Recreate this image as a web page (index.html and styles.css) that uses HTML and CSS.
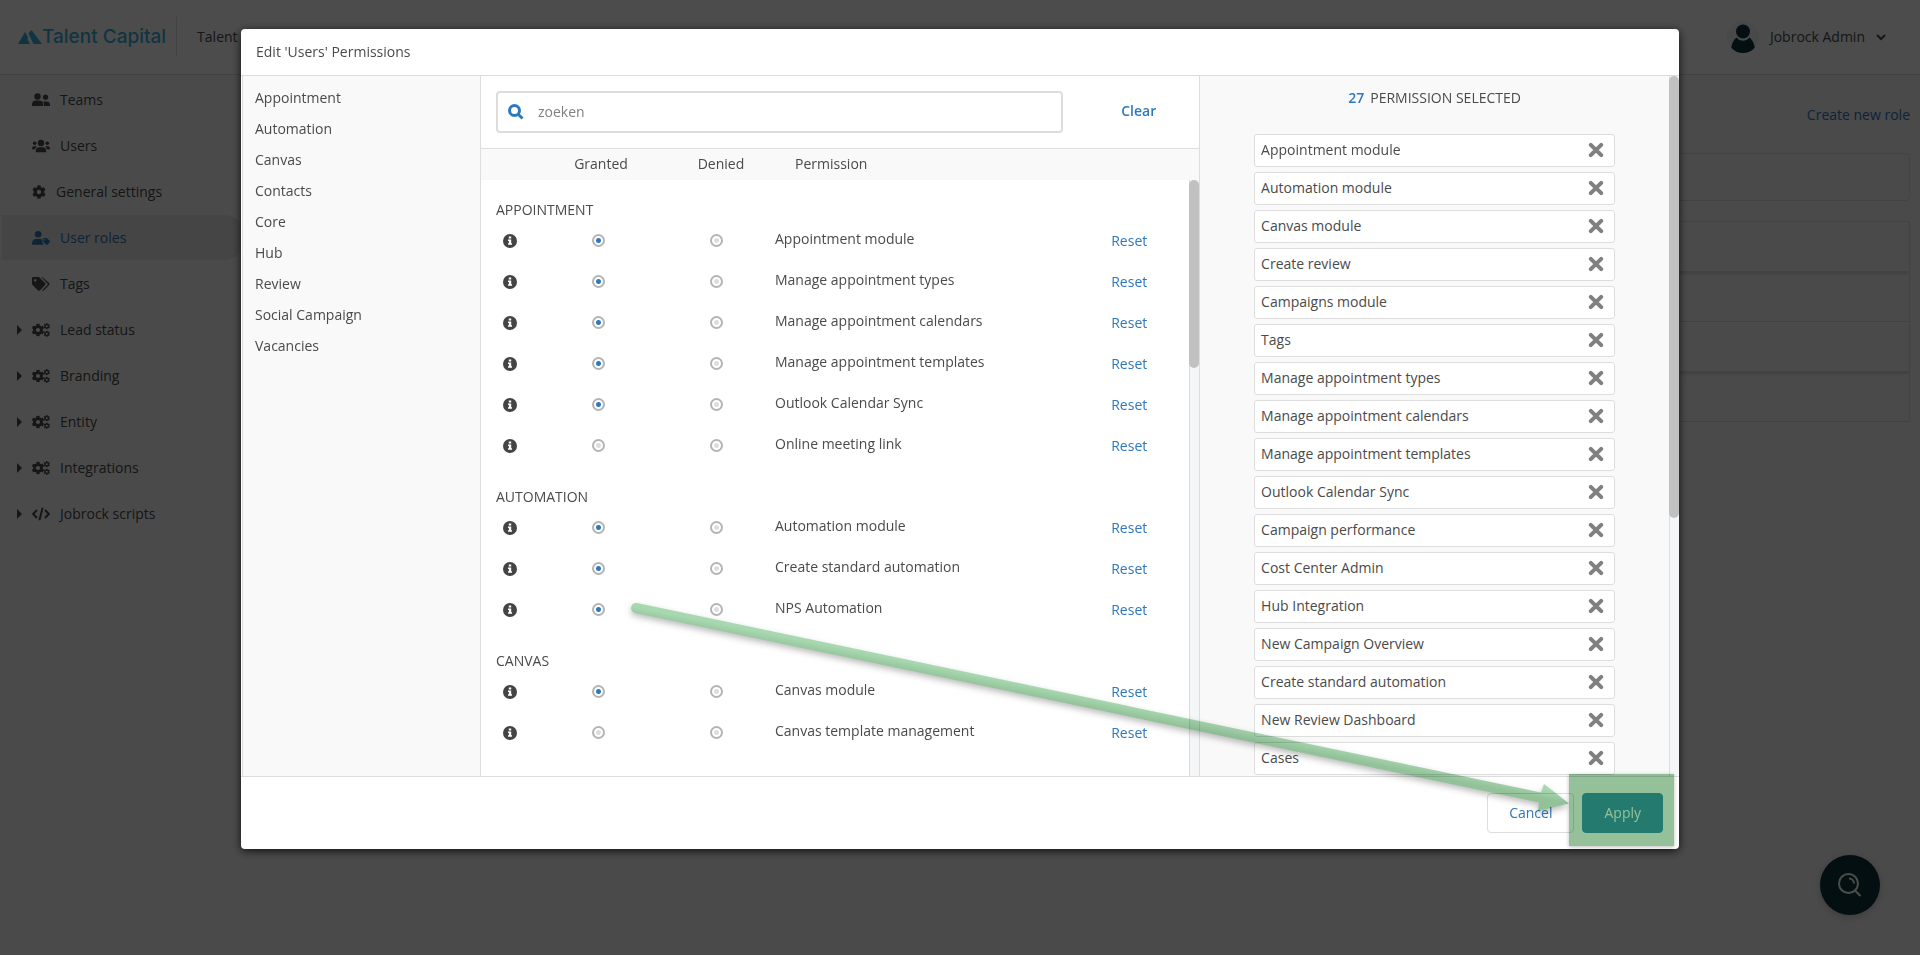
FILE: index.html
```html
<!DOCTYPE html>
<html lang="en">
<head>
<meta charset="utf-8">
<title>Edit 'Users' Permissions</title>
<link rel="stylesheet" href="styles.css">
</head>
<body>
<svg class="defs" aria-hidden="true">
  <symbol id="i-teams" viewBox="0 0 18 14"><circle cx="5.5" cy="3.5" r="3.2"/><path d="M0 13v-1.500a4 4 0 0 1 4-4h3.200a4 4 0 0 1 4 4V13z"/><circle cx="13.500" cy="4.200" r="2.600"/><path d="M12 13h6v-1.200a3.400 3.400 0 0 0-3.400-3.400h-2.400c-.5 0-.9.100-1.200.2.700.9 1 2.600 1 4.400z"/></symbol>
  <symbol id="i-users" viewBox="0 0 18 14"><circle cx="9" cy="4" r="3.200"/><path d="M3.800 13.200v-1.400A3.600 3.600 0 0 1 7.400 8.200h3.200a3.600 3.600 0 0 1 3.600 3.600v1.400z"/><circle cx="2.700" cy="4.200" r="1.800"/><circle cx="15.300" cy="4.200" r="1.800"/><path d="M0 9.400c0-1.200.8-2.200 2-2.200h1.600c.5 0 1 .2 1.300.5-1 .6-1.600 1.500-1.800 2.500H0zM18 9.400c0-1.200-.8-2.200-2-2.200h-1.600c-.5 0-1 .2-1.300.5 1 .6 1.600 1.500 1.800 2.500H18z"/></symbol>
  <symbol id="i-gear" viewBox="0 0 512 512"><path d="M487.400 315.700l-42.600-24.600c4.300-23.200 4.300-47 0-70.200l42.600-24.600c4.900-2.800 7.100-8.600 5.500-14-11.100-35.600-30-67.800-54.700-94.600-3.800-4.100-10-5.100-14.800-2.300L380.800 110c-17.900-15.400-38.500-27.300-60.800-35.100V25.800c0-5.600-3.900-10.500-9.400-11.700-36.700-8.200-74.300-7.800-109.200 0-5.500 1.200-9.400 6.100-9.400 11.700V75c-22.200 7.900-42.800 19.800-60.800 35.100L88.700 85.500c-4.900-2.800-11-1.900-14.800 2.300-24.700 26.700-43.600 58.900-54.700 94.600-1.700 5.400.6 11.200 5.500 14L67.300 221c-4.300 23.200-4.300 47 0 70.200l-42.600 24.600c-4.900 2.800-7.100 8.600-5.500 14 11.100 35.600 30 67.800 54.700 94.600 3.800 4.100 10 5.100 14.800 2.300l42.600-24.600c17.900 15.400 38.500 27.300 60.800 35.100v49.200c0 5.600 3.900 10.500 9.400 11.700 36.700 8.200 74.300 7.800 109.200 0 5.500-1.200 9.400-6.100 9.400-11.700v-49.200c22.200-7.900 42.800-19.800 60.800-35.100l42.600 24.600c4.900 2.800 11 1.900 14.800-2.300 24.700-26.700 43.600-58.900 54.700-94.600 1.500-5.500-.7-11.300-5.600-14.100zM256 336c-44.100 0-80-35.900-80-80s35.900-80 80-80 80 35.900 80 80-35.900 80-80 80z"/></symbol>
  <symbol id="i-gears" viewBox="0 0 18 14"><use href="#i-gear" x="-.5" y=".5" width="13" height="13"/><use href="#i-gear" x="11.500" y="0" width="6.500" height="6.500"/><use href="#i-gear" x="11.500" y="7.500" width="6.500" height="6.500"/></symbol>
  <symbol id="i-usertag" viewBox="0 0 18 14"><circle cx="6.200" cy="3.300" r="3.300"/><path d="M0 13.800v-1.600A4.200 4.200 0 0 1 4.200 8h4c.8 0 1.500.2 2.100.5v2.600c0 .5.200.9.500 1.200l1.500 1.500z"/><path fill-rule="evenodd" d="M11.200 7.800c0-.4.300-.7.700-.7h2.700c.3 0 .5.100.7.300l2.500 2.500c.4.400.4.900 0 1.300l-2.400 2.400c-.4.400-.9.400-1.300 0l-2.600-2.600a1 1 0 0 1-.3-.7zm1.700 1.600a.7.700 0 1 0 0-1.400.7.700 0 0 0 0 1.400z"/></symbol>
  <symbol id="i-tags" viewBox="0 0 18 14"><path fill-rule="evenodd" d="M0 1.300C0 .6.600 0 1.300 0h5.200c.4 0 .7.100 1 .4l5.600 5.700c.5.500.5 1.300 0 1.900l-5.200 5.400c-.5.500-1.300.5-1.900 0L.4 7.700A1.300 1.300 0 0 1 0 6.800zM3.200 4.500a1.300 1.300 0 1 0 0-2.600 1.300 1.300 0 0 0 0 2.600z"/><path d="M9.300 0h1l6.800 6.100c.6.600.6 1.300 0 1.900l-5.300 5.400c-.5.500-1.200.5-1.700.2L16 7.200z"/></symbol>
  <symbol id="i-code" viewBox="0 0 18 14"><path d="M5 3L1.200 7 5 11M13 3l3.800 4L13 11M10.600.8L7.400 13.200" fill="none" stroke="currentColor" stroke-width="2"/></symbol>
  <symbol id="i-info" viewBox="0 0 14 14"><circle cx="7" cy="7" r="7"/><path fill="#fff" d="M5.800 2.600h2.400v2H5.800zM5 5.600h3.200v3.600H9v1.500H5V9.200h.9V7.100H5z"/></symbol>
  <symbol id="i-x" viewBox="0 0 16 16"><path d="M2.800 2.800l10.400 10.400M13.200 2.800L2.800 13.200" fill="none" stroke="currentColor" stroke-width="4" stroke-linecap="round"/></symbol>
</svg>

<div class="app">
  <header class="topbar">
    <a class="logo" href="#"><svg width="24" height="14" viewBox="0 0 24 14" aria-hidden="true"><path d="M0 14L7 2l3 5.200L8.500 14zM10.500 3.500L13.500 0 24 14H15.500z"/><path d="M6 14l3-5 3 5z"/></svg>Talent Capital</a>
    <span class="tenant">Talent Capital</span>
    <button class="account" type="button">
      <svg width="32" height="32" viewBox="0 0 32 32" aria-hidden="true"><circle class="avatar-bg" cx="16" cy="16" r="16"/><circle cx="16" cy="10.500" r="7"/><path d="M9.500 16.500c2 2.200 4.200 3.200 6.500 3.200s4.500-1 6.500-3.200c3 2.500 4.800 6.200 5.200 10.200-3 3.300-7 5.300-11.700 5.300S7.300 30 4.300 26.700c.4-4 2.200-7.700 5.200-10.200z"/></svg>
      <span>Jobrock Admin</span>
      <svg class="chev" width="10" height="7" viewBox="0 0 10 7" aria-hidden="true"><path d="M1 1l4 4 4-4"/></svg>
    </button>
  </header>
  <div class="body">
    <nav class="side" id="side"></nav>
    <main class="main">
      <div class="actions"><a href="#">Create new role</a></div>
      <div class="filter"></div>
      <div class="grid"><div class="line shade"></div><div class="line"></div><div class="line shade"></div><div class="line"></div></div>
    </main>
  </div>
  <button class="fab" type="button" aria-label="Search"><svg width="24" height="24" viewBox="0 0 24 24" aria-hidden="true"><circle cx="10.500" cy="10.500" r="9.500"/><path d="M11 5.500a5 5 0 0 1 5 5M16.500 17l6 6"/></svg></button>
</div>

<div class="backdrop">
  <section class="modal" role="dialog" aria-labelledby="modal-title">
    <h1 class="modal-title" id="modal-title">Edit 'Users' Permissions</h1>
    <div class="panes">
      <nav class="cats" id="cats"></nav>
      <div class="perms">
        <div class="searchbar">
          <label class="search"><svg width="16" height="16" viewBox="0 0 16 16" aria-hidden="true"><circle cx="6.500" cy="6.500" r="5"/><path d="M10.200 10.200l4.300 4.300"/></svg><input type="text" placeholder="zoeken" aria-label="zoeken"></label>
          <button class="link clear" type="button">Clear</button>
        </div>
        <div class="cols"><span></span><span>Granted</span><span>Denied</span><span>Permission</span></div>
        <div class="scroller">
          <div class="list" id="list"></div>
          <div class="track"><div class="thumb thumb-list"></div></div>
        </div>
      </div>
      <div class="scroller picked">
        <div class="picked-body">
          <p class="count"><b>27</b>PERMISSION SELECTED</p>
          <ul class="chips" id="chips"></ul>
        </div>
        <div class="track"><div class="thumb thumb-picked"></div></div>
      </div>
    </div>
    <footer class="foot">
      <button class="btn" type="button">Cancel</button>
      <button class="btn primary" type="button">Apply</button>
    </footer>
    <div class="mark"></div>
    <svg class="arrow" viewBox="0 0 950 225" aria-hidden="true">
      <defs><linearGradient id="g" gradientUnits="userSpaceOnUse" x1="451" y1="103" x2="449" y2="113"><stop offset="0" stop-color="#a8d8b0"/><stop offset="1" stop-color="#92c19a"/></linearGradient></defs>
      <path fill="url(#g)" d="M11 11.100L915 200.600l3-8.600 25 19.500-31 7.500 1-8.600L9 20.900A5 5 0 0 1 11 11.100z"/>
    </svg>
  </section>
</div>
<script src="app.js"></script>
</body>
</html>
```

FILE: styles.css
```css
* { box-sizing: border-box; }
body { margin: 0; font: 500 14px/20px "Open Sans", "Noto Sans", sans-serif; color: #4a4a4a; }
button, input { font: inherit; color: inherit; }
button { background: none; border: 0; padding: 0; cursor: pointer; }
a { color: #2e78bd; text-decoration: none; }
svg { flex: none; fill: currentColor; }
.defs { position: absolute; width: 0; height: 0; }

.app { min-height: 100vh; display: flex; flex-direction: column; background: #f9f9f9; }
.topbar { height: 75px; display: flex; align-items: center; padding: 0 34px 0 18px; background: #fff; border-bottom: 1px solid #ddd; }
.logo { display: flex; align-items: center; color: #3bafda; font: 500 19px/40px Inter, sans-serif; padding-right: 10px; border-right: 1px solid #ddd; }
.tenant { padding-left: 20px; flex: 1; }
.account { display: flex; align-items: center; gap: 11px; color: #4a4a4a; }
.account svg { fill: #0d3538; }
.account .avatar-bg { fill: #f4f4f4; }
.account .chev { fill: none; stroke: #4a4a4a; stroke-width: 2; }
.body { flex: 1; display: flex; }
.side { width: 256px; padding: 2px 10px 0 2px; display: flex; flex-direction: column; gap: 1px; }
.item { height: 45px; display: flex; align-items: center; padding-left: 14px; color: #4a4a4a; }
.item .caret { width: 16px; height: 10px; }
.item .caret path { fill: #4a4a4a; }
.item .ico { margin-right: 10px; }
.item.active { background: #e6e6e6; border-radius: 0 22px 22px 0; color: #2e78bd; }
.main { flex: 1; padding: 30px 10px; }
.actions { text-align: right; }
.filter { height: 48px; margin: 28px 0 20px; border: 1px solid #e0e0e0; border-radius: 4px; }
.grid { border: 1px solid #e0e0e0; border-bottom: 0; }
.line { height: 50px; border-bottom: 1px solid #ddd; }
.shade { box-shadow: 0 2px 3px #d8d8d8; }
.fab { position: fixed; right: 40px; bottom: 40px; width: 60px; height: 60px; border-radius: 50%; background: #0d3538; box-shadow: 0 2px 8px #0003; display: grid; place-items: center; }
.fab svg { fill: none; stroke: #fff; stroke-width: 2; }

.backdrop { position: fixed; inset: 0; background: rgba(0, 0, 0, .7); padding: 29px 241px 106px; display: flex; }
.modal { position: relative; flex: 1; min-width: 0; display: flex; flex-direction: column; background: #fff; border-radius: 4px; box-shadow: 0 2px 10px #000c; }
.modal-title { margin: 0; padding: 13px 15px; font-size: 14px; font-weight: 400; line-height: 20px; border-bottom: 1px solid #ddd; }
.panes { flex: 1; min-height: 0; display: flex; }
.cats { flex: none; width: 239px; background: #f9f9f9; border: solid #ddd; border-width: 0 1px; margin-left: 1px; padding: 6px 12px; }
.cats a { display: block; line-height: 31px; color: #4a4a4a; }
.perms { flex: 3; min-width: 0; display: flex; flex-direction: column; border-right: 1px solid #ddd; }
.searchbar { display: flex; align-items: center; padding: 15px 0 15px 15px; border-bottom: 1px solid #ddd; }
.search { flex: 1; height: 42px; display: flex; align-items: center; gap: 14px; padding: 0 10px; border: 2px solid #ddd; border-radius: 4px; }
.search svg { fill: none; stroke: #2e78bd; stroke-width: 3; }
.search input { flex: 1; border: 0; outline: 0; background: none; padding: 0; }
.search input::placeholder { color: #808080; opacity: 1; }
.link { color: #2e78bd; font-weight: 500; }
.clear { width: 136px; padding: 0 15px 2px 30px; font-weight: 600; }
.cols { display: grid; grid-template-columns: 60px 120px 120px 1fr; line-height: 30px; padding-bottom: 1px; background: #f9f9f9; text-align: center; }
.cols span:last-child { text-align: left; padding-left: 14px; }
.scroller { flex: 1; min-height: 0; display: flex; overflow: hidden; }
.list { flex: 1; }
.group { margin: 0; padding: 21px 15px 0; font-size: 14px; font-weight: 500; line-height: 20px; }
.group:first-child { padding-top: 20px; }
.row { height: 41px; display: grid; grid-template-columns: 58px 118px 118px 1fr 78px; align-items: center; }
.row > svg { margin-left: 22px; color: #444; }
.row input { appearance: none; width: 13px; height: 13px; margin: 0 auto; border: 2px solid #b4b4b4; border-radius: 50%; background: radial-gradient(circle, #ddd 2px, #fff 3px); }
.row input:checked { background: radial-gradient(circle, #2e78bd 2px, #fff 3px); }
.row .name { padding: 0 0 4px; }
.row .link { text-align: left; }
.track { width: 10px; background: #f5f6f8; border-left: 1px solid #ddd; }
.thumb { width: 10px; margin-left: -1px; border-radius: 5px; background: #c1c1c1; }
.thumb-list { height: 188px; }
.thumb-picked { height: 442px; }
.picked { flex: 2; min-width: 0; background: #f9f9f9; }
.picked-body { flex: 1; padding-top: 12px; }
.count { margin: 0; display: flex; justify-content: center; gap: 6px; }
.count b { color: #2e78bd; font-weight: 600; }
.chips { list-style: none; width: 77%; margin: 26px auto 0; padding: 0; display: grid; gap: 5px; }
.chips li { height: 33px; display: flex; align-items: center; justify-content: space-between; padding: 0 10px 2px 6px; background: #fff; border: 1px solid #ddd; border-radius: 3px; }
.chips button { display: flex; color: #808080; }
.foot { height: 73px; display: flex; align-items: center; justify-content: flex-end; gap: 8px; padding: 0 16px; border-top: 1px solid #ddd; }
.btn { height: 40px; padding: 0 21px; border: 1px solid #ddd; border-radius: 4px; color: #2e78bd; }
.primary { background: #40a1bb; border-color: #40a1bb; color: #fff; }
.mark { position: absolute; right: 5px; bottom: 3px; width: 105px; height: 72px; background: #94c199; mix-blend-mode: multiply; box-shadow: 0 1px 4px #0004; }
.arrow { position: absolute; right: 103px; bottom: 32px; width: 950px; height: 225px; mix-blend-mode: multiply; filter: drop-shadow(0 3px 3px #0004); }
```

FILE: app.js
```js
const icon = (id, w, h, cls = "") => `<svg class="${cls}" width="${w}" height="${h}" aria-hidden="true"><use href="#i-${id}"/></svg>`;
const caret = on => `<svg class="caret" viewBox="0 0 16 10" aria-hidden="true">${on ? '<path d="M1 0l5 5-5 5z"/>' : ""}</svg>`;
const side = [["Teams", "teams"], ["Users", "users"], ["General settings", "gear"], ["User roles", "usertag"], ["Tags", "tags"], ["Lead status", "gears", 1], ["Branding", "gears", 1], ["Entity", "gears", 1], ["Integrations", "gears", 1], ["Jobrock scripts", "code", 1]];
document.getElementById("side").innerHTML = side.map(([t, i, c]) => `<a href="#" class="item${t === "User roles" ? " active" : ""}">${caret(c)}${icon(i, i === "gear" ? 14 : 18, 14, "ico")}${t}</a>`).join("");

document.getElementById("cats").innerHTML = ["Appointment", "Automation", "Canvas", "Contacts", "Core", "Hub", "Review", "Social Campaign", "Vacancies"].map(t => `<a href="#">${t}</a>`).join("");

const groups = [
  ["APPOINTMENT", [["Appointment module", 1], ["Manage appointment types", 1], ["Manage appointment calendars", 1], ["Manage appointment templates", 1], ["Outlook Calendar Sync", 1], ["Online meeting link", 0]]],
  ["AUTOMATION", [["Automation module", 1], ["Create standard automation", 1], ["NPS Automation", 1]]],
  ["CANVAS", [["Canvas module", 1], ["Canvas template management", 0]]]
];
document.getElementById("list").innerHTML = groups.map(([g, rows]) => `<h2 class="group">${g}</h2>` + rows.map(([t, on]) =>
  `<div class="row">${icon("info", 14, 14)}<input type="radio" name="${t}" aria-label="${t}: granted"${on ? " checked" : ""}><input type="radio" name="${t}" aria-label="${t}: denied"><span class="name">${t}</span><button class="link" type="button">Reset</button></div>`).join("")).join("");

document.getElementById("chips").innerHTML = ["Appointment module", "Automation module", "Canvas module", "Create review", "Campaigns module", "Tags", "Manage appointment types", "Manage appointment calendars", "Manage appointment templates", "Outlook Calendar Sync", "Campaign performance", "Cost Center Admin", "Hub Integration", "New Campaign Overview", "Create standard automation", "New Review Dashboard", "Cases"].map(t => `<li>${t}<button type="button" aria-label="Remove ${t}">${icon("x", 16, 16)}</button></li>`).join("");
```
